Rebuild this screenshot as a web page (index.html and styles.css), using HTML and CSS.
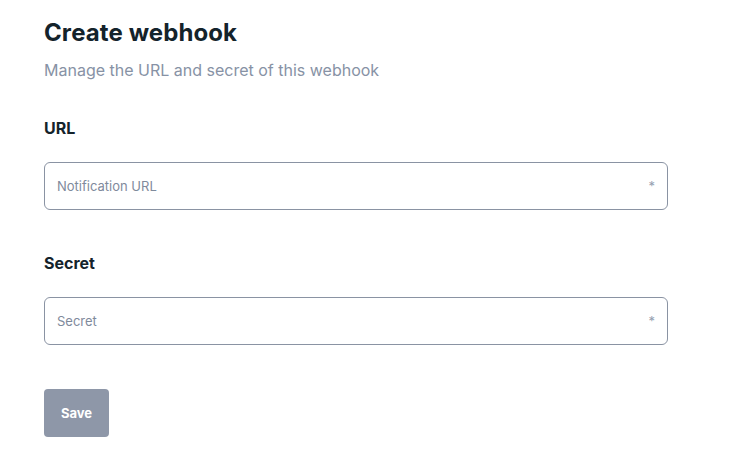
FILE: index.html
```html
<!DOCTYPE html>
<html lang="en">
<head>
<meta charset="utf-8">
<title>Create webhook</title>
<link rel="stylesheet" href="styles.css">
</head>
<body>
<main class="page">
  <header class="header">
    <h1 class="title">Create webhook</h1>
    <p class="subtitle">Manage the URL and secret of this webhook</p>
  </header>
  <form class="form">
    <div class="field">
      <label class="label" for="url">URL</label>
      <div class="input-wrap">
        <input class="input" id="url" type="text" placeholder="Notification URL">
        <span class="req">*</span>
      </div>
    </div>
    <div class="field">
      <label class="label" for="secret">Secret</label>
      <div class="input-wrap">
        <input class="input" id="secret" type="text" placeholder="Secret">
        <span class="req">*</span>
      </div>
    </div>
    <div class="actions">
      <button class="btn" type="button">Save</button>
    </div>
  </form>
</main>
</body>
</html>
```
FILE: styles.css
```css
* { box-sizing: border-box; }
html, body { margin: 0; padding: 0; background: #ffffff; }
body { font-family: Inter, "Noto Sans", "Liberation Sans", sans-serif; color: #16252d; }
.page { padding: 17px 0 0 44px; width: 668px; }
.header { display: flex; flex-direction: column; gap: 9px; }
.title { margin: 0; font-size: 24px; line-height: 32px; font-weight: 700; color: #14232b; letter-spacing: 0.1px; }
.subtitle { margin: 0; font-size: 16px; line-height: 24px; color: #8792a5; }
.form { display: flex; flex-direction: column; gap: 41px; margin-top: 34px; }
.field { display: flex; flex-direction: column; gap: 22px; }
.label { font-size: 16px; line-height: 24px; font-weight: 700; color: #14232b; }
.input-wrap { position: relative; }
.input { display: block; width: 100%; height: 48px; border: 1px solid #8a93a3; border-radius: 6px; padding: 0 30px 0 12px; font-family: inherit; font-size: 13px; color: #14232b; background: #fff; outline: none; }
.input::placeholder { color: #7f8a9c; }
.req { position: absolute; right: 13px; top: 16px; font-size: 13px; line-height: 16px; color: #95a0b0; }
.actions { padding-top: 3px; }
.btn { height: 48px; width: 65px; border: 0; border-radius: 4px; background: #8e97a8; color: #ffffff; font-family: inherit; font-size: 13px; font-weight: 700; padding: 0; }
```
